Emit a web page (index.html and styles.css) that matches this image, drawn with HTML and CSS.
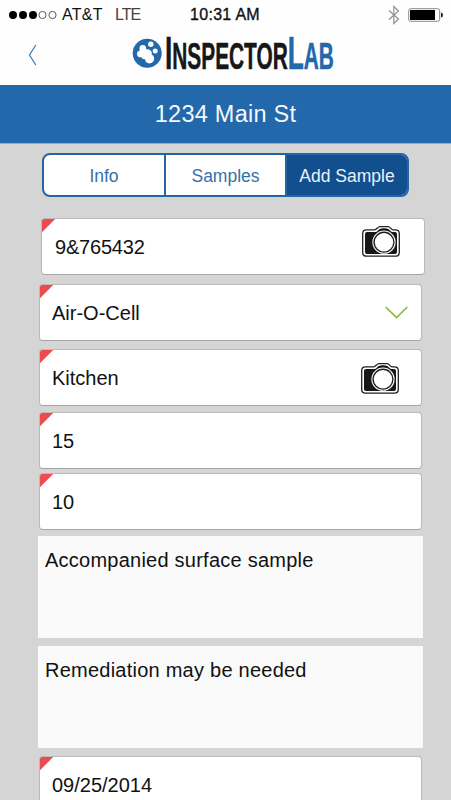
FILE: index.html
```html
<!DOCTYPE html>
<html lang="en">
<head>
<meta charset="utf-8">
<title>InspectorLab</title>
<link rel="stylesheet" href="styles.css">
</head>
<body>
<svg class="defs" width="0" height="0" aria-hidden="true">
  <symbol id="camera" viewBox="0 0 38 31">
    <path d="M4.500 3.800H12.500C15 3.500 15.500 .7 18 .7H26C28.500 .7 29 3.500 31 3.800H33.500Q37.300 3.800 37.300 7.500V26.500Q37.300 30.200 33.500 30.200H4.500Q.7 30.200 .7 26.500V7.500Q.7 3.800 4.500 3.800Z" fill="#fff" stroke="#222" stroke-width="1.3"/>
    <path d="M5 6H14C16 5.600 16.500 3 18.500 3H25.500C27.500 3 28 5.600 30 6H33Q35 6 35 8V26Q35 28 33 28H5Q3 28 3 26V8Q3 6 5 6Z" fill="#171717"/>
    <circle cx="22" cy="16.200" r="11.600" fill="#fff"/>
    <circle cx="22" cy="16.200" r="9.900" fill="#fff" stroke="#222" stroke-width="1.400"/>
    <path d="M17 4.300Q22 1.500 27 4.300" fill="none" stroke="#111" stroke-width="1.400"/>
  </symbol>
</svg>
<header class="top">
  <div class="status">
    <svg class="signal" width="48" height="10" viewBox="0 0 48 10">
      <g fill="#000"><circle cx="4" cy="5" r="4"/><circle cx="14" cy="5" r="4"/><circle cx="24" cy="5" r="4"/></g>
      <g fill="none" stroke="#333" stroke-width=".8"><circle cx="33.500" cy="5" r="3.600"/><circle cx="43.500" cy="5" r="3.600"/></g>
    </svg>
    <span class="carrier">AT&amp;T</span>
    <span class="network">LTE</span>
    <span class="time">10:31 AM</span>
    <svg class="bluetooth" width="12" height="20" viewBox="0 0 12 20"><path d="M1 5.500L10.500 14L5.800 18.500V1.500L10.500 6L1 14.500" fill="none" stroke="#929292" stroke-width="1.200"/></svg>
    <svg class="battery" width="36" height="14" viewBox="0 0 36 14"><rect x=".7" y=".7" width="31" height="12.600" rx="2" fill="#fff" stroke="#888" stroke-width="1"/><rect x="2" y="2" width="25" height="10" fill="#000"/><path d="M33 4.500Q35 4.500 35 7T33 9.500Z" fill="#222"/></svg>
  </div>
  <div class="brand">
    <svg class="back" width="9" height="22" viewBox="0 0 9 22"><path d="M7.800 1L1.500 11L7.800 21" fill="none" stroke="#3f7fb5" stroke-width="1.300"/></svg>
    <svg class="logo" width="33" height="40" viewBox="0 0 33 40">
      <circle cx="15.200" cy="20.200" r="14.500" fill="#2268ab"/>
      <g fill="#fff">
        <circle cx="10.800" cy="15.400" r="3.300"/><circle cx="18.800" cy="11.300" r="2.700"/><circle cx="23.200" cy="17.900" r="2.500"/>
        <path d="M5 21.300C4.600 18.300 8 16.500 11 17.600C15.500 14.600 20.500 17 19.800 21.500C23.500 23.500 22.800 29.500 18.500 30.300C15 31 13.300 28.700 13 26.200C11 26.500 9.700 25.500 9.300 24C7 24.800 5.200 23.500 5 21.300Z"/>
      </g>
    </svg>
    <div class="logo-text"><span class="cap">I</span><span>NSPECTOR</span><span class="cap blue">L</span><span class="blue">AB</span></div>
  </div>
</header>
<h1 class="title">1234 Main St</h1>
<nav class="tabs">
  <a class="tab">Info</a>
  <a class="tab">Samples</a>
  <a class="tab active">Add Sample</a>
</nav>
<main class="form">
  <div class="field first"><span class="serial">9&amp;765432</span><svg class="camera"><use href="#camera"/></svg></div>
  <div class="field type"><span>Air-O-Cell</span><svg class="chevron" width="23" height="13" viewBox="0 0 23 13"><path d="M.7 1L11.500 11.500L22.300 1" fill="none" stroke="#8aba43" stroke-width="1.700"/></svg></div>
  <div class="field room"><span>Kitchen</span><svg class="camera"><use href="#camera"/></svg></div>
  <div class="field compact"><span>15</span></div>
  <div class="field last"><span>10</span></div>
  <div class="note">Accompanied surface sample</div>
  <div class="note second">Remediation may be needed</div>
  <div class="field date"><span>09/25/2014</span></div>
</main>
</body>
</html>
```
FILE: styles.css
```css
* { box-sizing: border-box; }
body {
  margin: 0;
  height: 800px;
  overflow: hidden;
  background: #d5d5d5;
  color: #111;
  font-family: "Liberation Sans", Arial, sans-serif;
}
svg { display: block; flex: none; }
.defs { position: absolute; }
.top { height: 85px; background: #fefefe; }
.status { display: flex; align-items: center; height: 29px; padding-left: 9px; font-size: 16px; white-space: nowrap; }
.carrier { width: 52px; padding-left: 5px; letter-spacing: .3px; }
.network { width: 81px; padding-left: 6px; color: #444; letter-spacing: -1px; }
.time { width: 198px; letter-spacing: .3px; -webkit-text-stroke: .35px #111; }
.battery { margin-left: 8px; }
.brand { display: flex; align-items: flex-start; padding-left: 28px; }
.back { margin-top: 15px; }
.logo { margin: 4px 0 0 95px; }
.logo-text {
  display: flex;
  flex: none;
  align-items: baseline;
  width: 293px;
  margin-right: -150px;
  color: #171717;
  font-size: 36.5px;
  font-weight: 700;
  line-height: 48px;
  white-space: nowrap;
  transform: scaleX(.571);
  transform-origin: 0 0;
  -webkit-text-stroke: .5px currentColor;
}
.cap { font-size: 46px; }
.blue { color: #2268ab; }
.title {
  margin: 0;
  height: 59px;
  background: #2268ab;
  border-bottom: 1px solid #8aaed0;
  color: #f4f8fc;
  font-size: 23.5px;
  font-weight: 400;
  line-height: 59px;
  letter-spacing: .25px;
  text-align: center;
}
.tabs {
  display: grid;
  grid-template-columns: 122px 121px 1fr;
  width: 367px;
  height: 44px;
  margin: 9px 0 0 42px;
  overflow: hidden;
  border: 2px solid #2565a3;
  border-radius: 8px;
  background: #fff;
}
.tab { color: #3471ab; font-size: 17.5px; line-height: 42px; text-align: center; border-right: 2px solid #2565a3; }
.tab.active { border: 0; background: #124f8e; color: #e9f2fa; }
.form { padding-top: 21px; }
.field {
  display: flex;
  align-items: center;
  justify-content: space-between;
  width: 383px;
  height: 57px;
  margin: 0 0 8px 39px;
  padding: 0 22px 0 12px;
  border: 1px solid #b9b9b9;
  border-bottom-color: #a5a5a5;
  border-radius: 4px;
  background: linear-gradient(135deg, #ee4b4e 9px, #fff 9.600px);
  font-size: 20px;
}
.field span { position: relative; top: 1px; }
.field.first { width: 384px; margin: 0 0 9px 41px; padding: 0 24px 0 13px; }
.serial { letter-spacing: -.2px; }
.camera { width: 38px; height: 31px; margin-top: 1px; }
.first .camera { margin-top: -10px; }
.type .chevron { margin: 0 -9px 0 0; }
.room { margin-bottom: 6px; }
.compact { margin-bottom: 4px; }
.last { margin-bottom: 6px; }
.note { width: 385px; height: 102px; margin: 0 0 8px 38px; padding: 12px 7px; background: #fafafa; font-size: 20px; line-height: 24px; letter-spacing: .24px; }
```
